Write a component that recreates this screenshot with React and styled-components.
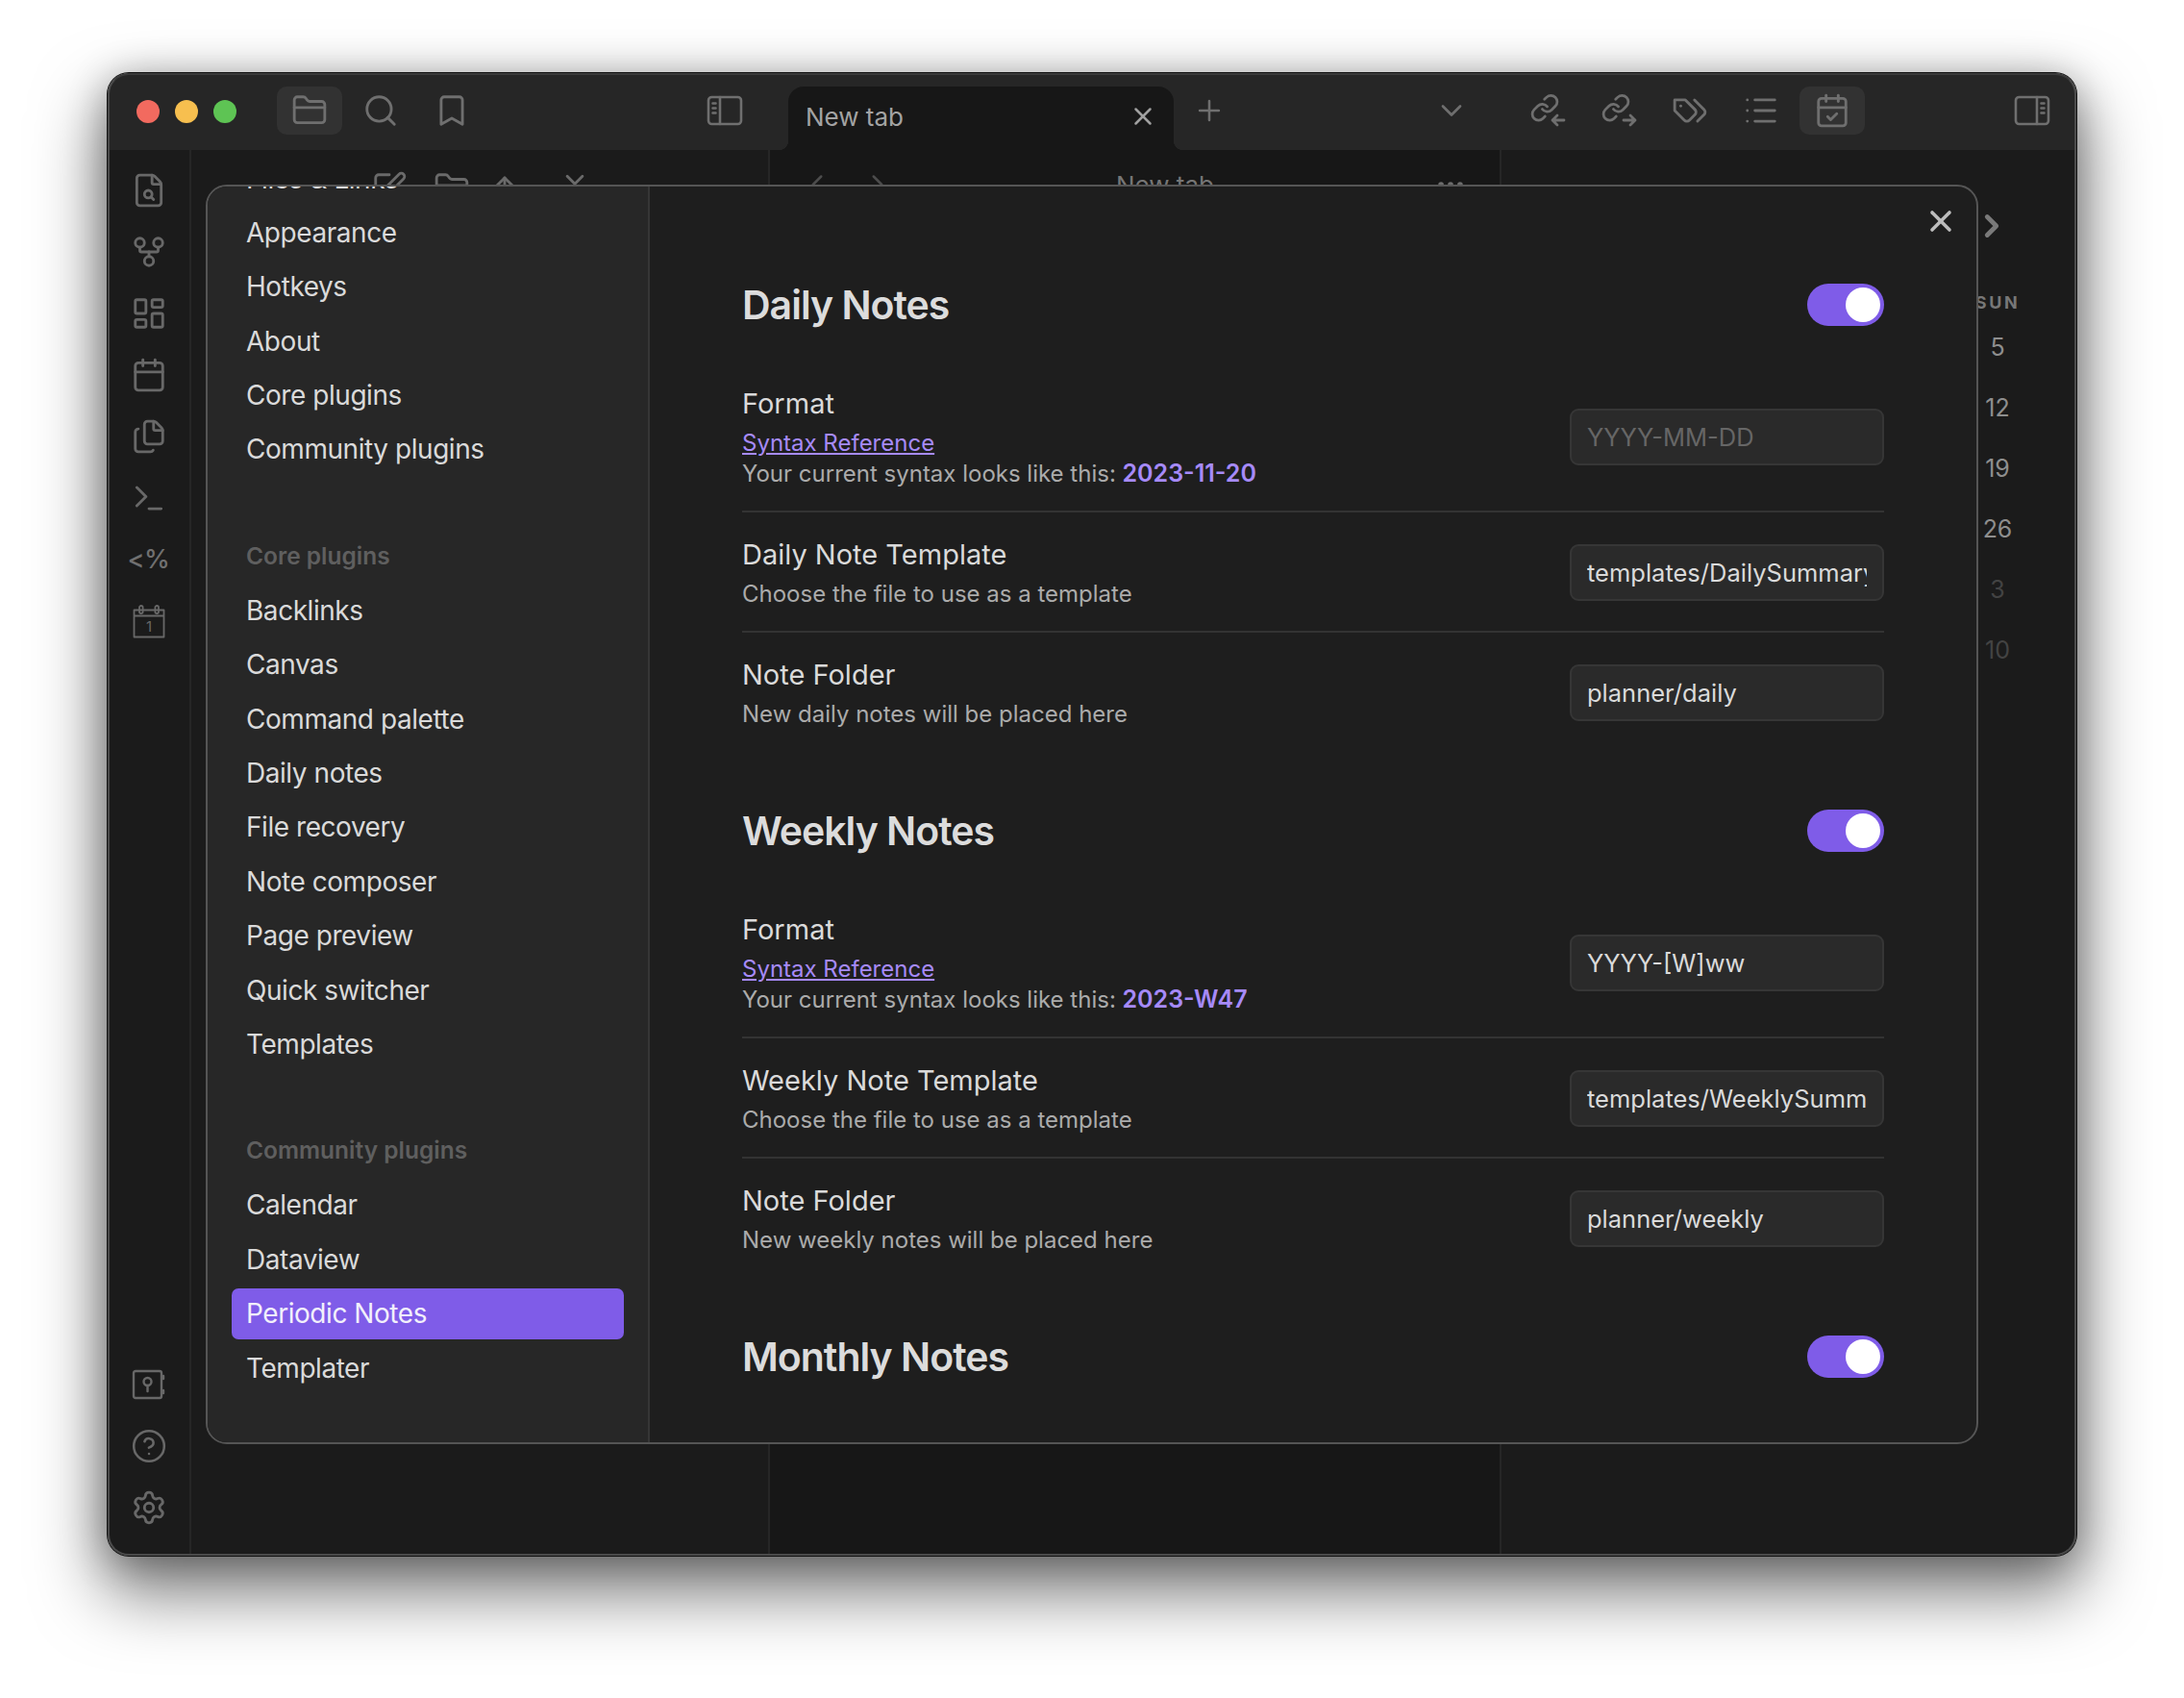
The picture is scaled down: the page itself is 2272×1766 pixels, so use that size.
import React from 'react';
import styled, { createGlobalStyle } from 'styled-components';
import {
  FolderClosed, Search, Bookmark, X, Plus, ChevronDown, ChevronLeft, ChevronRight, ChevronsDownUp,
  List, CalendarCheck, FileSearch, GitFork, LayoutDashboard, Calendar, Files, Terminal,
  CircleHelp, Settings, SquarePen, ArrowUp, MoreHorizontal,
} from 'lucide-react';

const GlobalStyle = createGlobalStyle`
  html, body {
    margin: 0;
    background: #fff;
    font-family: Inter, "Liberation Sans", sans-serif;
  }
`;

const Page = styled.div`
  width: 2272px;
  height: 1766px;
  padding: 76px 112px 148px;
  box-sizing: border-box;
  overflow: hidden;
`;

const Window = styled.div`
  position: relative;
  height: 100%;
  display: flex;
  flex-direction: column;
  border-radius: 22px;
  overflow: hidden;
  box-shadow: 0 0 0 1px #111, 0 34px 70px 6px rgba(0, 0, 0, 0.5), 0 6px 40px rgba(0, 0, 0, 0.3);
  &::after {
    content: '';
    position: absolute;
    inset: 0;
    border-radius: 22px;
    border: 2px solid #4a4a4a;
    border-top-color: #3a3a3a;
    pointer-events: none;
  }
`;

const TitleBar = styled.div`
  height: 80px;
  flex: none;
  display: flex;
  align-items: flex-start;
  padding: 14px 12px 0 30px;
  box-sizing: border-box;
  background: #262626;
`;

const Lights = styled.div`
  display: flex;
  gap: 16px;
  margin: 14px 42px 0 0;
`;

const Light = styled.span`
  width: 24px;
  height: 24px;
  border-radius: 50%;
  background: ${(p) => p.$color};
`;

const IconGroup = styled.div`
  display: flex;
  gap: 6px;
  margin-left: ${(p) => p.$left || 0}px;
`;

const ToolButton = styled.div`
  width: 68px;
  height: 50px;
  flex: none;
  display: flex;
  align-items: center;
  justify-content: center;
  border-radius: 10px;
  color: #6f6f6f;
  background: ${(p) => (p.$active ? '#323232' : 'transparent')};
  margin-left: ${(p) => p.$left || 0}px;
`;

const Tab = styled.div`
  position: relative;
  width: 401px;
  height: 66px;
  flex: none;
  margin-left: 32px;
  display: flex;
  align-items: center;
  justify-content: space-between;
  padding: 0 17px 4px 18px;
  box-sizing: border-box;
  border-radius: 16px 16px 0 0;
  background: #171717;
  color: #a3a3a3;
  font-size: 26px;
  &::before, &::after {
    content: '';
    position: absolute;
    bottom: 0;
    width: 10px;
    height: 10px;
  }
  &::before {
    left: -10px;
    background: radial-gradient(circle at 0 0, transparent 10px, #171717 10.5px);
  }
  &::after {
    right: -10px;
    background: radial-gradient(circle at 100% 0, transparent 10px, #171717 10.5px);
  }
`;

const Body = styled.div`
  flex: 1;
  min-height: 0;
  display: flex;
`;

const Ribbon = styled.div`
  width: 87px;
  flex: none;
  display: flex;
  flex-direction: column;
  justify-content: space-between;
  align-items: center;
  padding: 10px 0 18px;
  box-sizing: border-box;
  background: #1b1b1b;
  border-right: 2px solid #262626;
`;

const RibbonGroup = styled.div`
  display: flex;
  flex-direction: column;
`;

const RibbonButton = styled.div`
  width: 64px;
  height: 64px;
  display: flex;
  align-items: center;
  justify-content: center;
  color: #686868;
`;

const TemplaterMark = styled.span`
  font-size: 27px;
  font-weight: 500;
  letter-spacing: -0.5px;
  margin-top: -2px;
  color: #707070;
`;

const SidePane = styled.div`
  width: 600px;
  flex: none;
  box-sizing: border-box;
  padding: 8px 0 0 187px;
  background: #1b1b1b;
`;

const PaneTools = styled.div`
  display: flex;
  align-items: center;
  height: 64px;
  color: #6a6a6a;
`;

const PaneTool = styled.span`
  display: flex;
  margin-right: ${(p) => p.$gap || 0}px;
`;

const CenterPane = styled.div`
  width: 763px;
  flex: none;
  box-sizing: border-box;
  padding: 4px 32px 0 32px;
  background: #171717;
  border-left: 2px solid #262626;
  border-right: 2px solid #262626;
`;

const PaneHeader = styled.div`
  display: grid;
  grid-template-columns: 328px auto 1fr;
  align-items: center;
  height: 64px;
  color: #4c4c4c;
`;

const PaneNav = styled.div`
  display: flex;
  gap: 29px;
`;

const PaneTitle = styled.span`
  font-size: 26px;
  color: #767676;
`;

const PaneMore = styled.span`
  justify-self: end;
  display: flex;
  margin-right: 2px;
  color: #6d6d6d;
`;

const RightPane = styled.div`
  flex: 1;
  display: flex;
  flex-direction: column;
  align-items: flex-end;
  padding: 60px 52px 0 0;
  box-sizing: border-box;
  background: #1b1b1b;
`;

const CalendarColumn = styled.div`
  width: 60px;
  display: flex;
  flex-direction: column;
  align-items: center;
`;

const CalendarNext = styled.div`
  height: 46px;
  margin: 0 12px 0 0;
  color: #7a7a7a;
`;

const WeekDay = styled.div`
  margin-top: 38px;
  height: 30px;
  font-size: 18px;
  font-weight: 700;
  letter-spacing: 2.6px;
  line-height: 30px;
  color: #777;
`;

const DayCell = styled.div`
  height: 63px;
  line-height: 63px;
  font-size: 25px;
  color: ${(p) => (p.$muted ? '#434343' : '#8e8e8e')};
  &:first-of-type {
    margin-top: 11px;
  }
`;

const Modal = styled.div`
  position: absolute;
  left: 102px;
  top: 116px;
  width: 1844px;
  height: 1310px;
  display: flex;
  box-sizing: border-box;
  border: 2px solid #555;
  border-radius: 22px;
  overflow: hidden;
  background: #1e1e1e;
`;

const ModalNav = styled.div`
  width: 460px;
  flex: none;
  box-sizing: border-box;
  padding: 0 25px;
  overflow: hidden;
  background: #272727;
  border-right: 2px solid #363636;
`;

const NavList = styled.div`
  margin-top: -34.5px;
`;

const NavHeading = styled.div`
  padding: 60px 0 11px 15px;
  font-size: 24.5px;
  font-weight: 600;
  line-height: 40px;
  color: #5f5f5f;
`;

const NavItem = styled.div`
  height: 53px;
  margin-bottom: 3.4px;
  padding-left: 15px;
  border-radius: 7px;
  font-size: 28px;
  letter-spacing: -0.45px;
  line-height: 53px;
  color: ${(p) => (p.$active ? '#f2f0fb' : '#dadada')};
  background: ${(p) => (p.$active ? '#7f5ce8' : 'transparent')};
`;

const ModalClose = styled.div`
  position: absolute;
  top: 18px;
  right: 19px;
  display: flex;
  color: #bdbdbd;
`;

const ModalContent = styled.div`
  flex: 1;
  min-width: 0;
  overflow: hidden;
  box-sizing: border-box;
  padding: 101px 96px 0 96px;
`;

const Section = styled.div`
  margin-bottom: 61px;
`;

const SectionHead = styled.div`
  display: flex;
  align-items: center;
  justify-content: space-between;
  height: 44px;
  margin-bottom: 37px;
`;

const SectionTitle = styled.h2`
  margin: 0;
  font-size: 41px;
  font-weight: 600;
  letter-spacing: -1px;
  color: #dcdcdc;
`;

const Toggle = styled.div`
  position: relative;
  width: 80px;
  height: 44px;
  border-radius: 22px;
  background: #7f5ce8;
  &::after {
    content: '';
    position: absolute;
    top: 4px;
    right: 4px;
    width: 36px;
    height: 36px;
    border-radius: 50%;
    background: #fff;
  }
`;

const Row = styled.div`
  display: flex;
  align-items: center;
  justify-content: space-between;
  padding: 24px 0 22px;
  border-bottom: 2px solid #333;
  &:last-child {
    border-bottom: 0;
  }
`;

const RowInfo = styled.div`
  display: flex;
  flex-direction: column;
`;

const RowTitle = styled.div`
  margin-bottom: 5px;
  font-size: 29px;
  line-height: 40px;
  color: #dadada;
`;

const RowDesc = styled.div`
  height: 32px;
  font-size: 24px;
  line-height: 32px;
  color: #ababab;
`;

const DocLink = styled.a`
  color: #a68af9;
  text-decoration: underline;
`;

const Sample = styled.strong`
  font-size: 25px;
  font-weight: 600;
  line-height: 1;
  color: #a68af9;
`;

const TextField = styled.input`
  width: 327px;
  height: 59px;
  flex: none;
  box-sizing: border-box;
  padding: 0 16px;
  border: 2px solid #363636;
  border-radius: 9px;
  outline: none;
  background: #2a2a2a;
  font-family: inherit;
  font-size: 25.5px;
  color: #dadada;
  &::placeholder {
    color: #666;
    opacity: 1;
  }
`;

const lineIcon = { fill: 'none', stroke: 'currentColor', strokeLinecap: 'round', strokeLinejoin: 'round' };

function PanelIcon({ flip }) {
  return (
    <svg width="38" height="32" viewBox="0 0 38 32" {...lineIcon} strokeWidth="2.6">
      <g transform={flip ? 'matrix(-1 0 0 1 38 0)' : undefined}>
        <rect x="2" y="2" width="34" height="28" rx="3.5" />
        <path d="M14 2v28M6.5 8.5h3M6.5 13.5h3M6.5 18.5h3" />
      </g>
    </svg>
  );
}

function LinkArrowIcon({ out }) {
  return (
    <svg width="38" height="38" viewBox="0 0 38 38" {...lineIcon}>
      <g transform="translate(0.4 0.6) scale(1.3)" strokeWidth="2.1">
        <path d="M10 13a5 5 0 0 0 7.54.54l3-3a5 5 0 0 0-7.07-7.07l-1.72 1.71" />
        <path d="M14 11a5 5 0 0 0-7.54-.54l-3 3a5 5 0 0 0 7.07 7.07l1.71-1.71" />
      </g>
      <path strokeWidth="2.8" d={out ? 'M24 29h12M31 24l5 5-5 5' : 'M24 29h12M29 24l-5 5 5 5'} />
    </svg>
  );
}

function TagsIcon() {
  return (
    <svg width="38" height="38" viewBox="0 0 24 24" {...lineIcon} strokeWidth="1.8">
      <path d="M9 5H2v7l6.29 6.29c.94.94 2.48.94 3.42 0l3.58-3.58c.94-.94.94-2.48 0-3.42L9 5Z" />
      <path d="M6 9.01V9" />
      <path d="m15 5 6.3 6.3a2.4 2.4 0 0 1 0 3.4L17 19" />
    </svg>
  );
}

function VaultIcon() {
  return (
    <svg width="36" height="32" viewBox="0 0 36 32" {...lineIcon} strokeWidth="2.4">
      <rect x="2" y="2" width="29" height="28" rx="2" />
      <circle cx="16.5" cy="13" r="4" />
      <path d="M16.5 17v6M33 7v3M33 22v3" />
    </svg>
  );
}

function CalendarDayIcon() {
  return (
    <svg width="34" height="36" viewBox="0 0 34 36" {...lineIcon} strokeWidth="1.8">
      <path d="M1.5 6.5h31v28h-31zM1.5 12.5h31" />
      <rect x="7" y="2" width="3.6" height="8" rx="1.8" />
      <rect x="23.4" y="2" width="3.6" height="8" rx="1.8" />
      <text x="17" y="29" textAnchor="middle" fontSize="15" fill="currentColor" stroke="none" fontFamily="Inter, sans-serif">1</text>
    </svg>
  );
}

const ribbonTop = [
  <FileSearch size={38} strokeWidth={1.8} />,
  <GitFork size={38} strokeWidth={1.8} />,
  <LayoutDashboard size={38} strokeWidth={1.8} />,
  <Calendar size={38} strokeWidth={1.8} />,
  <Files size={38} strokeWidth={1.8} />,
  <Terminal size={38} strokeWidth={1.8} />,
  <TemplaterMark>{'<%'}</TemplaterMark>,
  <CalendarDayIcon />,
];

const ribbonBottom = [
  <VaultIcon />,
  <CircleHelp size={38} strokeWidth={1.6} />,
  <Settings size={38} strokeWidth={1.8} />,
];

const navOptions = ['Appearance', 'Hotkeys', 'About', 'Core plugins', 'Community plugins'];
const navCore = ['Backlinks', 'Canvas', 'Command palette', 'Daily notes', 'File recovery', 'Note composer', 'Page preview', 'Quick switcher', 'Templates'];
const navCommunity = ['Calendar', 'Dataview', 'Periodic Notes', 'Templater'];

const days = [
  { label: '5' }, { label: '12' }, { label: '19' }, { label: '26' },
  { label: '3', muted: true }, { label: '10', muted: true },
];

const sections = [
  {
    title: 'Daily Notes',
    sample: '2023-11-20',
    format: '',
    formatHint: 'YYYY-MM-DD',
    templateTitle: 'Daily Note Template',
    template: 'templates/DailySummary',
    folder: 'planner/daily',
    folderDesc: 'New daily notes will be placed here',
  },
  {
    title: 'Weekly Notes',
    sample: '2023-W47',
    format: 'YYYY-[W]ww',
    formatHint: '',
    templateTitle: 'Weekly Note Template',
    template: 'templates/WeeklySummary',
    folder: 'planner/weekly',
    folderDesc: 'New weekly notes will be placed here',
  },
];

function NotesSection({ section }) {
  return (
    <Section>
      <SectionHead>
        <SectionTitle>{section.title}</SectionTitle>
        <Toggle />
      </SectionHead>
      <Row>
        <RowInfo>
          <RowTitle>Format</RowTitle>
          <RowDesc><DocLink href="#">Syntax Reference</DocLink></RowDesc>
          <RowDesc>Your current syntax looks like this: <Sample>{section.sample}</Sample></RowDesc>
        </RowInfo>
        <TextField readOnly value={section.format} placeholder={section.formatHint} />
      </Row>
      <Row>
        <RowInfo>
          <RowTitle>{section.templateTitle}</RowTitle>
          <RowDesc>Choose the file to use as a template</RowDesc>
        </RowInfo>
        <TextField readOnly value={section.template} />
      </Row>
      <Row>
        <RowInfo>
          <RowTitle>Note Folder</RowTitle>
          <RowDesc>{section.folderDesc}</RowDesc>
        </RowInfo>
        <TextField readOnly value={section.folder} />
      </Row>
    </Section>
  );
}

export default function App() {
  return (
    <Page>
      <GlobalStyle />
      <Window>
        <TitleBar>
          <Lights>
            <Light $color="#f26a5f" />
            <Light $color="#f7bf4f" />
            <Light $color="#5ec454" />
          </Lights>
          <IconGroup>
            <ToolButton $active><FolderClosed size={38} strokeWidth={1.8} /></ToolButton>
            <ToolButton><Search size={38} strokeWidth={1.8} /></ToolButton>
            <ToolButton><Bookmark size={38} strokeWidth={1.8} /></ToolButton>
          </IconGroup>
          <ToolButton $left={216}><PanelIcon /></ToolButton>
          <Tab>
            New tab
            <X size={30} strokeWidth={2} color="#a0a0a0" />
          </Tab>
          <ToolButton $left={3}><Plus size={34} strokeWidth={1.8} /></ToolButton>
          <ToolButton $left={184}><ChevronDown size={36} strokeWidth={1.8} /></ToolButton>
          <IconGroup $left={32}>
            <ToolButton><LinkArrowIcon /></ToolButton>
            <ToolButton><LinkArrowIcon out /></ToolButton>
            <ToolButton><TagsIcon /></ToolButton>
            <ToolButton><List size={38} strokeWidth={1.8} /></ToolButton>
            <ToolButton $active><CalendarCheck size={38} strokeWidth={1.8} /></ToolButton>
          </IconGroup>
          <ToolButton $left={140}><PanelIcon flip /></ToolButton>
        </TitleBar>
        <Body>
          <Ribbon>
            <RibbonGroup>
              {ribbonTop.map((icon, i) => <RibbonButton key={i}>{icon}</RibbonButton>)}
            </RibbonGroup>
            <RibbonGroup>
              {ribbonBottom.map((icon, i) => <RibbonButton key={i}>{icon}</RibbonButton>)}
            </RibbonGroup>
          </Ribbon>
          <SidePane>
            <PaneTools>
              <PaneTool $gap={27}><SquarePen size={38} strokeWidth={1.8} /></PaneTool>
              <PaneTool $gap={17}><FolderClosed size={38} strokeWidth={1.8} /></PaneTool>
              <PaneTool $gap={35}><ArrowUp size={38} strokeWidth={1.8} /></PaneTool>
              <PaneTool><ChevronsDownUp size={38} strokeWidth={1.8} /></PaneTool>
            </PaneTools>
          </SidePane>
          <CenterPane>
            <PaneHeader>
              <PaneNav>
                <ChevronLeft size={34} strokeWidth={1.8} />
                <ChevronRight size={34} strokeWidth={1.8} />
              </PaneNav>
              <PaneTitle>New tab</PaneTitle>
              <PaneMore><MoreHorizontal size={34} strokeWidth={2} /></PaneMore>
            </PaneHeader>
          </CenterPane>
          <RightPane>
            <CalendarColumn>
              <CalendarNext><ChevronRight size={38} strokeWidth={3} /></CalendarNext>
              <WeekDay>SUN</WeekDay>
              {days.map((day) => <DayCell key={day.label} $muted={day.muted}>{day.label}</DayCell>)}
            </CalendarColumn>
          </RightPane>
        </Body>
        <Modal>
          <ModalNav>
            <NavList>
              <NavItem>Files &amp; Links</NavItem>
              {navOptions.map((item) => <NavItem key={item}>{item}</NavItem>)}
              <NavHeading>Core plugins</NavHeading>
              {navCore.map((item) => <NavItem key={item}>{item}</NavItem>)}
              <NavHeading>Community plugins</NavHeading>
              {navCommunity.map((item) => <NavItem key={item} $active={item === 'Periodic Notes'}>{item}</NavItem>)}
            </NavList>
          </ModalNav>
          <ModalContent>
            {sections.map((section) => <NotesSection key={section.title} section={section} />)}
            <SectionHead>
              <SectionTitle>Monthly Notes</SectionTitle>
              <Toggle />
            </SectionHead>
          </ModalContent>
          <ModalClose><X size={36} strokeWidth={2.4} /></ModalClose>
        </Modal>
      </Window>
    </Page>
  );
}
